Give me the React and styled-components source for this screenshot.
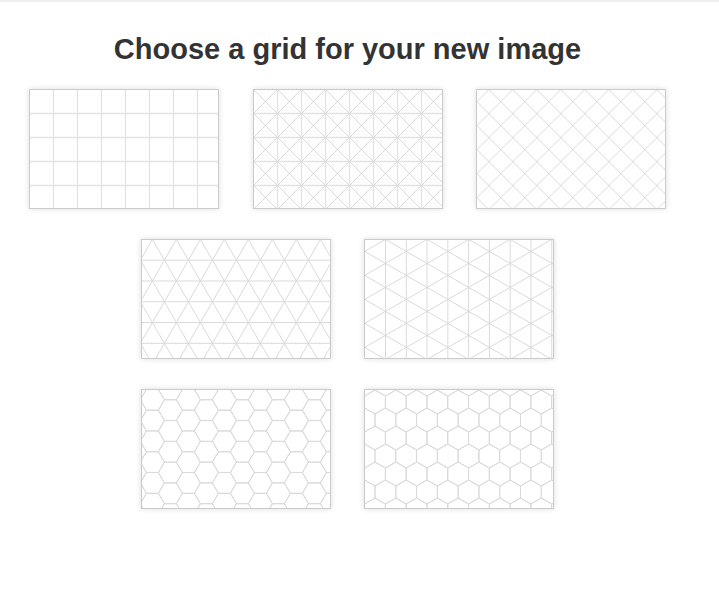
import React from "react"
import styled, { createGlobalStyle } from "styled-components"

const W = 188
const H = 118
const R3 = Math.sqrt(3)
const LINE = "#dadada"
const SOFT = "#e2e2e2"

const range = (a, b) => {
  const out = []
  for (let i = a; i <= b; i++) out.push(i)
  return out
}

// straight vertical / horizontal rules
const rules = (step, ox, oy) => [
  ...range(0, Math.ceil(W / step) + 1)
    .map(k => ox + k * step)
    .filter(x => x > 0 && x < W)
    .map(x => ({ x1: x, y1: 0, x2: x, y2: H, c: SOFT, w: 1.3 })),
  ...range(0, Math.ceil(H / step) + 1)
    .map(k => oy + k * step)
    .filter(y => y > 0 && y < H)
    .map(y => ({ x1: 0, y1: y, x2: W, y2: y, c: SOFT, w: 1.3 })),
]

// 45 degree lines, x - y = a + k*step and x + y = b + k*step
const diagonals = (step, a, b) => {
  const out = []
  range(-12, 14).forEach(k => {
    const c1 = a + k * step
    out.push({ x1: c1 - 10, y1: -10, x2: c1 + H + 10, y2: H + 10, c: LINE, w: 1 })
    const c2 = b + k * step
    out.push({ x1: c2 + 10, y1: -10, x2: c2 - H - 10, y2: H + 10, c: LINE, w: 1 })
  })
  return out
}

const triangles = (y0, x0) => {
  const out = []
  const row = 24 * R3 / 2
  range(-1, 7).forEach(k => {
    const y = y0 + k * row
    if (y > 0 && y < H) out.push({ x1: 0, y1: y, x2: W, y2: y, c: LINE, w: 1 })
  })
  range(-8, 14).forEach(k => {
    const xk = x0 + k * 24
    const top = -10 - y0
    const bot = H + 10 - y0
    out.push({ x1: xk + top / R3, y1: -10, x2: xk + bot / R3, y2: H + 10, c: LINE, w: 1 })
    out.push({ x1: xk - top / R3, y1: -10, x2: xk - bot / R3, y2: H + 10, c: LINE, w: 1 })
  })
  return out
}

const trianglesUp = (x0, y0) => {
  const out = []
  const col = 24 * R3 / 2
  range(-1, 10).forEach(k => {
    const x = x0 + k * col
    if (x > 0 && x < W) out.push({ x1: x, y1: 0, x2: x, y2: H, c: LINE, w: 1 })
  })
  range(-10, 10).forEach(k => {
    const yk = y0 + k * 24
    const l = -10 - x0
    const r = W + 10 - x0
    out.push({ x1: -10, y1: yk + l / R3, x2: W + 10, y2: yk + r / R3, c: LINE, w: 1 })
    out.push({ x1: -10, y1: yk - l / R3, x2: W + 10, y2: yk - r / R3, c: LINE, w: 1 })
  })
  return out
}

const hexFlat = (cx0, cy0) => {
  const s = 12
  const h = s * R3 / 2
  const polys = []
  range(-1, 12).forEach(i => {
    range(-1, 7).forEach(j => {
      const cx = cx0 + i * 18
      const cy = cy0 + j * 2 * h + (Math.abs(i) % 2 ? h : 0)
      polys.push(
        [
          [cx + s, cy],
          [cx + s / 2, cy + h],
          [cx - s / 2, cy + h],
          [cx - s, cy],
          [cx - s / 2, cy - h],
          [cx + s / 2, cy - h],
        ]
          .map(p => p.join(","))
          .join(" ")
      )
    })
  })
  return polys
}

const hexPointy = (cx0, cy0) => {
  const s = 12
  const w = s * R3 / 2
  const polys = []
  range(-1, 8).forEach(j => {
    range(-1, 11).forEach(i => {
      const cx = cx0 + i * 2 * w + (Math.abs(j) % 2 ? w : 0)
      const cy = cy0 + j * 18
      polys.push(
        [
          [cx, cy - s],
          [cx + w, cy - s / 2],
          [cx + w, cy + s / 2],
          [cx, cy + s],
          [cx - w, cy + s / 2],
          [cx - w, cy - s / 2],
        ]
          .map(p => p.join(","))
          .join(" ")
      )
    })
  })
  return polys
}

const GRIDS = [
  [
    { id: "square", lines: rules(24, 23.5, 23.5) },
    { id: "square-x", lines: [...diagonals(24, 0, 23), ...rules(24, 23.5, 23.5)] },
    { id: "diamond", lines: diagonals(24, 12.3, 11.5) },
  ],
  [
    { id: "triangle", lines: triangles(-0.6, 10.4) },
    { id: "triangle-v", lines: trianglesUp(-0.3, 11.4) },
  ],
  [
    { id: "hex-flat", hexes: hexFlat(-7.6, -0.6) },
    { id: "hex-pointy", hexes: hexPointy(10, 12) },
  ],
]

const GlobalStyle = createGlobalStyle`
  body {
    margin: 0;
    background: #fff;
    font-family: "Liberation Sans", Arial, sans-serif;
  }
`

const Page = styled.div`
  border-top: 2px solid #efefef;
  padding-bottom: 60px;
`

const Content = styled.main`
  width: 695px;
`

const Title = styled.h1`
  margin: 31px 0 23px;
  font-size: 29px;
  line-height: 33px;
  font-weight: 700;
  color: #333;
  text-align: center;
`

const Rows = styled.div`
  display: flex;
  flex-direction: column;
  gap: 30px;
`

const Row = styled.div`
  display: flex;
  justify-content: center;
  gap: 33.5px;
`

const Card = styled.button`
  box-sizing: border-box;
  width: 190px;
  height: 120px;
  padding: 0;
  border: 1px solid #cacaca;
  background: #fff;
  box-shadow: 0 0 6px rgba(0, 0, 0, 0.13);
  cursor: pointer;
  overflow: hidden;

  svg {
    display: block;
  }
`

const GridPreview = ({ lines = [], hexes = [] }) => (
  <svg width={W} height={H} viewBox={`0 0 ${W} ${H}`}>
    {lines.map((l, i) => (
      <line
        key={i}
        x1={l.x1}
        y1={l.y1}
        x2={l.x2}
        y2={l.y2}
        stroke={l.c}
        strokeWidth={l.w}
      />
    ))}
    {hexes.map((p, i) => (
      <polygon key={i} points={p} fill="none" stroke={LINE} strokeWidth="1" />
    ))}
  </svg>
)

export default function App() {
  return (
    <>
      <GlobalStyle />
      <Page>
        <Content>
          <Title>Choose a grid for your new image</Title>
          <Rows>
            {GRIDS.map((row, r) => (
              <Row key={r}>
                {row.map(g => (
                  <Card key={g.id} aria-label={g.id}>
                    <GridPreview lines={g.lines} hexes={g.hexes} />
                  </Card>
                ))}
              </Row>
            ))}
          </Rows>
        </Content>
      </Page>
    </>
  )
}
